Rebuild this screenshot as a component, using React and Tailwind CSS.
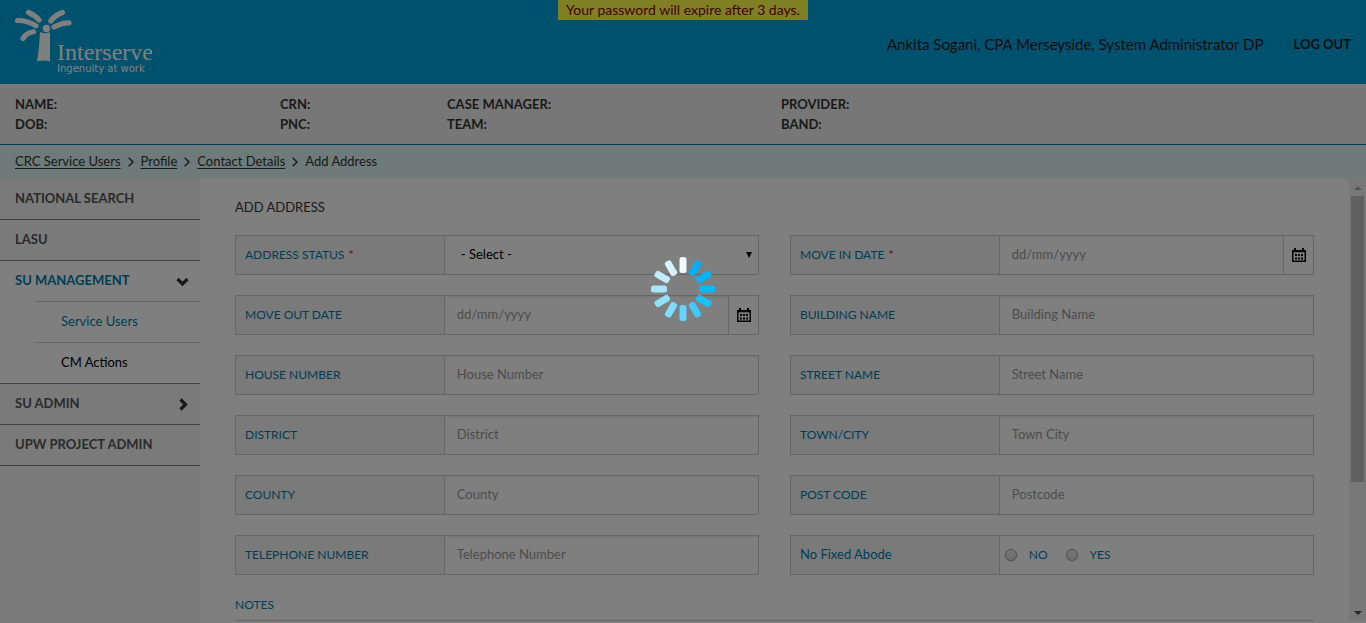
import React from "react";

function Logo() {
  return (
    <svg width="138" height="68" viewBox="14 8 138 68" role="img" aria-label="Interserve, Ingenuity at work">
      <g fill="none" stroke="#fff" strokeWidth="5.2" strokeLinecap="round">
        <path d="M28.500 12.500Q35 15 39 20" />
        <path d="M17.500 20.500Q28 20.500 36 25.800" />
        <path d="M23 38.500Q26 33 33.500 31.800" />
        <path d="M50.800 21Q54.500 15.500 62.500 12.500" />
        <path d="M54 27Q61 23 69 22.800" />
      </g>
      <circle cx="46.500" cy="28.500" r="3.700" fill="#fff" />
      <path d="M40 32Q45 34.500 50 32V61.500Q43 59.500 37 61.500Q39.500 47 40 32Z" fill="#fff" />
      <text x="57" y="60" fill="#fff" fontSize="24" fontFamily="Liberation Serif, serif">Interserve</text>
      <text x="57" y="72" fill="#fff" fontSize="10" fontFamily="DejaVu Sans, sans-serif">Ingenuity at work</text>
    </svg>
  );
}

function CalendarIcon() {
  return (
    <svg width="14" height="14" viewBox="0 0 14 14" aria-hidden="true">
      <path
        fill="#000"
        fillRule="evenodd"
        d="M2 0h2v2h6V0h2v2h2v12H0V2h2zM1.500 4.300v8.200h11V4.300z"
      />
      <path fill="#000" d="M3 6h2v2H3zM6 6h2v2H6zM9 6h2v2H9zM3 9.500h2v2H3zM6 9.500h2v2H6zM9 9.500h2v2H9z" />
    </svg>
  );
}

function Chevron({ down }) {
  return (
    <svg width="13" height="13" viewBox="0 0 13 13" aria-hidden="true" fill="none" stroke="#333" strokeWidth="3.2">
      <path d={down ? "M1.500 4L6.500 9L11.500 4" : "M4.500 1.500L9.500 6.500L4.500 11.500"} />
    </svg>
  );
}

function Crumb({ children }) {
  return (
    <li className="flex items-center gap-[7px]">
      <a href="#" className="underline underline-offset-2">{children}</a>
      <svg width="6" height="10" viewBox="0 0 6 10" aria-hidden="true" fill="none" stroke="#333" strokeWidth="1.500">
        <path d="M0.700 0.700L5 5L0.700 9.300" />
      </svg>
    </li>
  );
}

function Field({ id, label, required, mixedCase, children }) {
  return (
    <div className="flex h-10 border border-[#ccc]">
      <label
        htmlFor={id}
        className={`flex w-2/5 items-center border-r border-[#ccc] bg-[#f4f4f4] pl-[9px] text-[#007bab] ${mixedCase ? "text-[13px]" : "text-xs"}`}
      >
        {label}
        {required && <span className="ml-1 text-[#c8005a]">*</span>}
      </label>
      <div className="flex min-w-0 flex-1">{children}</div>
    </div>
  );
}

function TextField({ id, label, placeholder }) {
  return (
    <Field id={id} label={label}>
      <input id={id} placeholder={placeholder} className="w-full bg-white px-3 shadow-[inset_0_1px_1px_rgba(0,0,0,0.08)] placeholder:text-[#999]" />
    </Field>
  );
}

function DateField({ id, label, required }) {
  return (
    <Field id={id} label={label} required={required}>
      <input id={id} placeholder="dd/mm/yyyy" className="min-w-0 flex-1 bg-white px-3 shadow-[inset_0_1px_1px_rgba(0,0,0,0.08)] placeholder:text-[#999]" />
      <button type="button" aria-label={"Choose " + label} className="flex w-[30px] items-center justify-center border-l border-[#ccc]">
        <CalendarIcon />
      </button>
    </Field>
  );
}

function Radio({ id, label }) {
  return (
    <span className="flex items-center gap-3">
      <input id={id} type="radio" name="abode" className="size-3 appearance-none rounded-full border border-[#999] bg-linear-to-b from-[#eee] to-[#ddd] shadow-sm" />
      <label htmlFor={id} className="text-xs text-[#007bab]">{label}</label>
    </span>
  );
}

const spokes = ["#f0faff", "#00b0ff", "#00b4ff", "#00b9ff", "#1ac0ff", "#3fcaff", "#66d4ff", "#7fdbff", "#90e0ff", "#a8e6ff", "#bfecff", "#d8f3ff"];

function Spinner() {
  return (
    <svg width="64" height="64" viewBox="0 0 64 64" role="img" aria-label="Loading">
      {spokes.map((color, i) => (
        <rect key={color} x="28.500" y="0" width="7" height="16" rx="2.500" fill={color} transform={`rotate(${i * 30} 32 32)`} />
      ))}
    </svg>
  );
}

const details = [["NAME:", "DOB:"], ["CRN:", "PNC:"], ["CASE MANAGER:", "TEAM:"], ["PROVIDER:", "BAND:"]];
const navItem = "flex h-[41px] items-center justify-between border-b border-[#808080] pr-[11px] pl-[15px] font-bold";

export default function App() {
  return (
    <div className="flex h-screen flex-col overflow-hidden bg-white font-[Lato,sans-serif] text-[13px] text-[#333]">
      <header className="relative flex h-[84px] shrink-0 items-start justify-between bg-[#00a2dc] px-[15px] pt-2">
        <div className="-ml-px"><Logo /></div>
        <p className="absolute top-0 left-1/2 h-5 w-[250px] -translate-x-1/2 bg-[#ffff46] text-center text-sm leading-5 text-[#900000]">
          Your password will expire after 3 days.
        </p>
        <div className="flex items-center gap-[30px] pt-6 text-[15px] leading-6 text-[#1a1a1a]">
          <span>Ankita Sogani, CPA Merseyside, System Administrator DP</span>
          <a href="#" className="text-[13px] font-bold">LOG OUT</a>
        </div>
      </header>

      <section className="grid h-[61px] shrink-0 grid-cols-[265px_167px_334px_1fr] border-b border-[#007bab] bg-[#eee] px-[15px] pt-2.5 leading-5 font-bold">
        {details.map(([a, b]) => (
          <div key={a}>
            <p>{a}</p>
            <p>{b}</p>
          </div>
        ))}
      </section>

      <nav aria-label="Breadcrumb" className="shrink-0 bg-[#def6f6] px-[15px]">
        <ol className="flex h-[34px] items-center gap-[7px]">
          <Crumb>CRC Service Users</Crumb>
          <Crumb>Profile</Crumb>
          <Crumb>Contact Details</Crumb>
          <li>Add Address</li>
        </ol>
      </nav>

      <div className="flex min-h-0 flex-1">
        <nav aria-label="Main" className="w-[200px] shrink-0 bg-[#f4f4f4] text-[#555]">
          <a href="#" className={navItem}>NATIONAL SEARCH</a>
          <a href="#" className={navItem}>LASU</a>
          <div className="border-b border-[#808080] bg-white">
            <a href="#" className="flex h-10 items-center justify-between pr-[11px] pl-[15px] font-bold text-[#007bab]">
              SU MANAGEMENT
              <Chevron down />
            </a>
            <ul className="pl-[35px]">
              <li><a href="#" className="flex h-[41px] items-center border-t border-[#ccc] pl-[26px] text-[#007bab]">Service Users</a></li>
              <li><a href="#" className="flex h-[41px] items-center border-t border-[#ccc] pl-[26px] text-black">CM Actions</a></li>
            </ul>
          </div>
          <a href="#" className={navItem}>SU ADMIN<Chevron /></a>
          <a href="#" className={navItem}>UPW PROJECT ADMIN</a>
        </nav>

        <div className="flex min-w-0 flex-1 pb-0.5">
          <main className="min-w-0 flex-1 overflow-hidden px-[35px] pt-4">
            <h1 className="leading-6">ADD ADDRESS</h1>
            <form className="mt-4">
              <div className="grid grid-cols-2 gap-x-[31px] gap-y-5">
                <Field id="status" label="ADDRESS STATUS" required>
                  <div className="relative w-full">
                    <select id="status" className="size-full appearance-none bg-white pl-4 text-black">
                      <option>- Select -</option>
                    </select>
                    <svg width="6" height="6" viewBox="0 0 6 6" aria-hidden="true" className="pointer-events-none absolute top-4 right-1.5">
                      <path d="M0 0H6L3 6Z" />
                    </svg>
                  </div>
                </Field>
                <DateField id="in" label="MOVE IN DATE" required />
                <DateField id="out" label="MOVE OUT DATE" />
                <TextField id="building" label="BUILDING NAME" placeholder="Building Name" />
                <TextField id="house" label="HOUSE NUMBER" placeholder="House Number" />
                <TextField id="street" label="STREET NAME" placeholder="Street Name" />
                <TextField id="district" label="DISTRICT" placeholder="District" />
                <TextField id="town" label="TOWN/CITY" placeholder="Town City" />
                <TextField id="county" label="COUNTY" placeholder="County" />
                <TextField id="post" label="POST CODE" placeholder="Postcode" />
                <TextField id="phone" label="TELEPHONE NUMBER" placeholder="Telephone Number" />
                <Field id="abode-no" label="No Fixed Abode" mixedCase>
                  <div className="flex items-center gap-[18px] pl-[5px]">
                    <Radio id="abode-no" label="NO" />
                    <Radio id="abode-yes" label="YES" />
                  </div>
                </Field>
              </div>
              <label htmlFor="notes" className="mt-5 block pb-[5px] text-xs leading-5 text-[#007bab]">NOTES</label>
              <textarea id="notes" rows="4" className="block w-full border border-[#ccc]" />
            </form>
          </main>
          <div aria-hidden="true" className="flex w-[17px] shrink-0 flex-col items-center bg-[#f1f1f1]">
            <div className="flex h-[17px] items-center">
              <svg width="8" height="4" viewBox="0 0 8 4"><path d="M0 4L4 0L8 4Z" fill="#a3a3a3" /></svg>
            </div>
            <div className="flex min-h-0 w-[13px] flex-1 flex-col">
              <div className="h-[70%] bg-[#c1c1c1]" />
            </div>
            <div className="flex h-[17px] items-center">
              <svg width="8" height="4" viewBox="0 0 8 4"><path d="M0 0L4 4L8 0Z" fill="#505050" /></svg>
            </div>
          </div>
        </div>
      </div>

      <div className="fixed inset-0 flex items-center justify-center bg-black/50 pb-[46px]">
        <Spinner />
      </div>
    </div>
  );
}
